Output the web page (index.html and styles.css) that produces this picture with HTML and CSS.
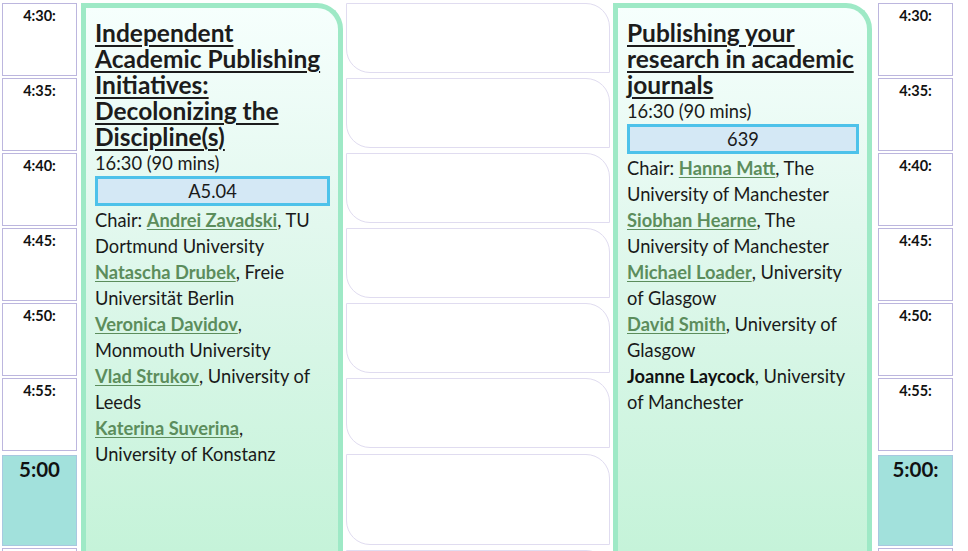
FILE: index.html
```html
<!DOCTYPE html>
<html>
<head>
<meta charset="utf-8">
<link rel="stylesheet" href="styles.css">
</head>
<body>
<div class="page">
  <div class="times">
    <div class="tcell">4:30:</div>
    <div class="tcell">4:35:</div>
    <div class="tcell">4:40:</div>
    <div class="tcell">4:45:</div>
    <div class="tcell">4:50:</div>
    <div class="tcell">4:55:</div>
    <div class="tcell hour">5:00</div>
    <div class="tcell"></div>
  </div>

  <div class="card card-left">
    <div class="title">Independent Academic Publishing Initiatives: Decolonizing the Discipline(s)</div>
    <div class="when">16:30 (90 mins)</div>
    <div class="room">A5.04</div>
    <div class="people">
      Chair: <a class="p">Andrei Zavadski</a>, TU Dortmund University<br>
      <a class="p">Natascha Drubek</a>, Freie Universität Berlin<br>
      <a class="p">Veronica Davidov</a>, Monmouth University<br>
      <a class="p">Vlad Strukov</a>, University of Leeds<br>
      <a class="p">Katerina Suverina</a>, University of Konstanz
    </div>
  </div>

  <div class="slots">
    <div class="slot"></div>
    <div class="slot"></div>
    <div class="slot"></div>
    <div class="slot"></div>
    <div class="slot"></div>
    <div class="slot"></div>
    <div class="slot tall"></div>
    <div class="slot"></div>
  </div>

  <div class="card card-right">
    <div class="title">Publishing your research in academic journals</div>
    <div class="when">16:30 (90 mins)</div>
    <div class="room">639</div>
    <div class="people">
      Chair: <a class="p">Hanna Matt</a>, The University of Manchester<br>
      <a class="p">Siobhan Hearne</a>, The University of Manchester<br>
      <a class="p">Michael Loader</a>, University of Glasgow<br>
      <a class="p">David Smith</a>, University of Glasgow<br>
      <b class="np">Joanne Laycock</b>, University of Manchester
    </div>
  </div>

  <div class="times times-right">
    <div class="tcell">4:30:</div>
    <div class="tcell">4:35:</div>
    <div class="tcell">4:40:</div>
    <div class="tcell">4:45:</div>
    <div class="tcell">4:50:</div>
    <div class="tcell">4:55:</div>
    <div class="tcell hour">5:00:</div>
    <div class="tcell"></div>
  </div>
</div>
</body>
</html>
```

FILE: styles.css
```css
html, body {
  margin: 0;
  padding: 0;
  background: #ffffff;
  overflow: hidden;
}
body {
  font-family: Lato, "Open Sans", "Liberation Sans", sans-serif;
  color: #1a1a1a;
}
.page {
  display: flex;
  align-items: flex-start;
  padding: 3px 0 0 2px;
  height: 551px;
  box-sizing: border-box;
  overflow: hidden;
}
.times {
  width: 75px;
  display: flex;
  flex-direction: column;
  gap: 2px;
  flex: none;
}
.times-right {
  margin-left: 6px;
}
.tcell {
  height: 73px;
  box-sizing: border-box;
  border: 1px solid #bcb6de;
  background: #ffffff;
  text-align: center;
  font-weight: 700;
  font-size: 14.5px;
  line-height: 18px;
  padding-top: 3px;
  color: #111;
}
.tcell.hour {
  height: 91px;
  background: #a2e1dc;
  font-size: 20.5px;
  line-height: 24px;
  padding-top: 1px;
  border-color: #a8c8e0;
  margin-top: 2px;
}
.card {
  flex: none;
  box-sizing: border-box;
  height: 548px;
  border: 5px solid #9ee9c6;
  border-bottom: none;
  border-top-right-radius: 26px;
  background: linear-gradient(180deg, #f6fffd 0%, #e2f8ee 40%, #c5f3d9 100%);
  padding: 12px 8px 0 9px;
  font-size: 18.3px;
  line-height: 26px;
}
.card-left {
  width: 262px;
  margin-left: 4px;
}
.card-right {
  width: 259px;
  margin-left: 3px;
}
.title {
  font-weight: 700;
  font-size: 24.5px;
  line-height: 26px;
  text-decoration: underline;
  text-decoration-thickness: 2px;
  text-underline-offset: 3px;
  color: #1c1c1c;
}
.when {
  line-height: 24px;
  margin-top: 1px;
}
.room {
  margin-top: 1px;
  height: 30px;
  box-sizing: border-box;
  border: 3px solid #4dc2ea;
  background: #d4e8f5;
  text-align: center;
  line-height: 24px;
}
.people {
  margin-top: 1px;
  margin-right: 6px;
  line-height: 26px;
}
.p {
  color: #5c8d5c;
  font-weight: 700;
  text-decoration: underline;
  text-underline-offset: 2px;
}
.np {
  font-weight: 700;
  color: #111;
}
.slots {
  flex: none;
  width: 264px;
  margin-left: 3px;
  display: flex;
  flex-direction: column;
  gap: 5px;
}
.slot {
  height: 70px;
  box-sizing: border-box;
  border: 1px solid #e0dcf0;
  border-top-right-radius: 24px;
  border-bottom-left-radius: 24px;
  background: #ffffff;
}
.slot.tall {
  height: 91px;
  margin-top: 1px;
}
```
